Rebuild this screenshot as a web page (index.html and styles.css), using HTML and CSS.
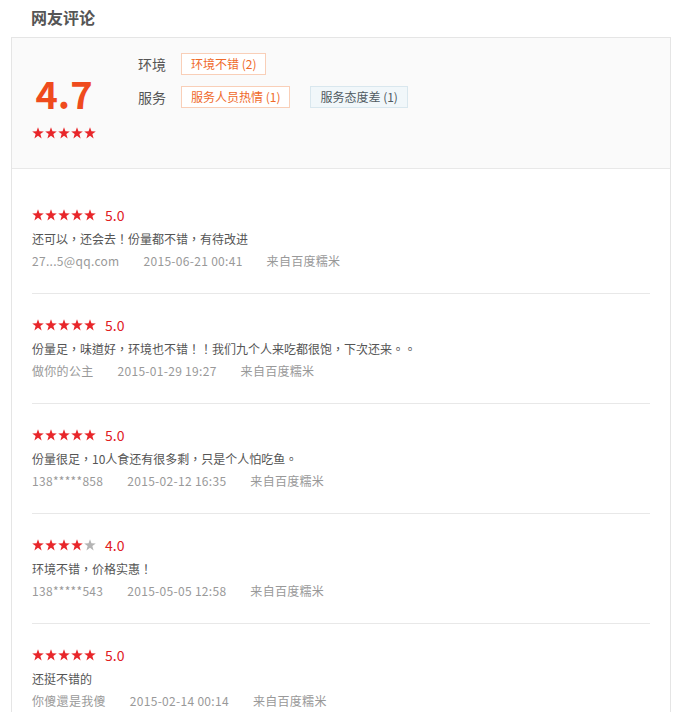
FILE: index.html
```html
<!DOCTYPE html>
<html>
<head>
    <meta charset="utf-8">
    <title>网友评论</title>
    <link rel="stylesheet" href="styles.css">
</head>
<body>
    <svg width="0" height="0" class="defs">
        <symbol id="star" viewBox="0 0 12 12">
            <polygon points="6,0.3 7.45,4.3 11.8,4.4 8.35,7.05 9.6,11.4 6,8.85 2.4,11.4 3.65,7.05 0.2,4.4 4.55,4.3"/>
        </symbol>
    </svg>

    <div class="comments">
        <div class="title">网友评论</div>

        <div class="panel">
            <div class="summary">
                <div class="score">
                    <div class="score-num">4.7</div>
                    <div class="stars">
                        <svg class="star"><use href="#star"/></svg><svg class="star"><use href="#star"/></svg><svg class="star"><use href="#star"/></svg><svg class="star"><use href="#star"/></svg><svg class="star"><use href="#star"/></svg>
                    </div>
                </div>
                <div class="tags">
                    <div class="tag-row">
                        <span class="tag-label">环境</span>
                        <span class="tag good">环境不错 (2)</span>
                    </div>
                    <div class="tag-row">
                        <span class="tag-label">服务</span>
                        <span class="tag good">服务人员热情 (1)</span>
                        <span class="tag bad">服务态度差 (1)</span>
                    </div>
                </div>
            </div>

            <div class="list">
                <div class="review">
                    <div class="rate">
                        <span class="stars"><svg class="star"><use href="#star"/></svg><svg class="star"><use href="#star"/></svg><svg class="star"><use href="#star"/></svg><svg class="star"><use href="#star"/></svg><svg class="star"><use href="#star"/></svg></span>
                        <span class="rate-num">5.0</span>
                    </div>
                    <div class="text">还可以，还会去！份量都不错，有待改进</div>
                    <div class="meta"><span>27...5@qq.com</span><span>2015-06-21 00:41</span><span>来自百度糯米</span></div>
                </div>
                <div class="review">
                    <div class="rate">
                        <span class="stars"><svg class="star"><use href="#star"/></svg><svg class="star"><use href="#star"/></svg><svg class="star"><use href="#star"/></svg><svg class="star"><use href="#star"/></svg><svg class="star"><use href="#star"/></svg></span>
                        <span class="rate-num">5.0</span>
                    </div>
                    <div class="text">份量足，味道好，环境也不错！！我们九个人来吃都很饱，下次还来。。</div>
                    <div class="meta"><span>做你的公主</span><span>2015-01-29 19:27</span><span>来自百度糯米</span></div>
                </div>
                <div class="review">
                    <div class="rate">
                        <span class="stars"><svg class="star"><use href="#star"/></svg><svg class="star"><use href="#star"/></svg><svg class="star"><use href="#star"/></svg><svg class="star"><use href="#star"/></svg><svg class="star"><use href="#star"/></svg></span>
                        <span class="rate-num">5.0</span>
                    </div>
                    <div class="text">份量很足，10人食还有很多剩，只是个人怕吃鱼。</div>
                    <div class="meta"><span>138*****858</span><span>2015-02-12 16:35</span><span>来自百度糯米</span></div>
                </div>
                <div class="review">
                    <div class="rate">
                        <span class="stars"><svg class="star"><use href="#star"/></svg><svg class="star"><use href="#star"/></svg><svg class="star"><use href="#star"/></svg><svg class="star"><use href="#star"/></svg><svg class="star off"><use href="#star"/></svg></span>
                        <span class="rate-num">4.0</span>
                    </div>
                    <div class="text">环境不错，价格实惠！</div>
                    <div class="meta"><span>138*****543</span><span>2015-05-05 12:58</span><span>来自百度糯米</span></div>
                </div>
                <div class="review">
                    <div class="rate">
                        <span class="stars"><svg class="star"><use href="#star"/></svg><svg class="star"><use href="#star"/></svg><svg class="star"><use href="#star"/></svg><svg class="star"><use href="#star"/></svg><svg class="star"><use href="#star"/></svg></span>
                        <span class="rate-num">5.0</span>
                    </div>
                    <div class="text">还挺不错的</div>
                    <div class="meta"><span>你傻還是我傻</span><span>2015-02-14 00:14</span><span>来自百度糯米</span></div>
                </div>
            </div>
        </div>
    </div>
</body>
</html>
```

FILE: styles.css
```css
body {
    margin: 0;
    background-color: #ffffff;
    font-family: "Noto Sans CJK SC", "Noto Sans", sans-serif;
    color: #555555;
}
.defs {
    position: absolute;
}
.comments {
    margin-left: 11px;
    width: 660px;
}
.title {
    height: 34px;
    line-height: 34px;
    margin-bottom: 3px;
    padding-left: 20px;
    font-size: 16px;
    font-weight: bold;
    color: #555555;
}
.panel {
    border: 1px solid #e5e5e5;
    border-bottom: none;
}
.summary {
    display: flex;
    align-items: flex-start;
    box-sizing: border-box;
    height: 131px;
    padding: 15px 0 0 20px;
    background-color: #fafafa;
    border-bottom: 1px solid #e8e8e8;
}
.score {
    width: 64px;
    margin-top: 20px;
    margin-right: 42px;
    text-align: center;
}
.score-num {
    height: 40px;
    line-height: 40px;
    font-size: 38px;
    font-weight: bold;
    color: #ef4b1d;
}
.score .stars {
    margin-top: 14px;
}
.stars {
    display: inline-flex;
    gap: 1px;
}
.star {
    width: 12px;
    height: 12px;
    fill: #e8262a;
}
.star.off {
    fill: #b4b4b4;
}
.tag-row {
    display: flex;
    align-items: center;
    height: 22px;
    margin-bottom: 11px;
}
.tag-label {
    width: 28px;
    margin-right: 15px;
    font-size: 14px;
    color: #555555;
}
.tag {
    box-sizing: border-box;
    height: 22px;
    line-height: 20px;
    padding: 0 9px;
    margin-right: 20px;
    font-size: 12px;
    border: 1px solid #f9cfb8;
    background-color: #ffffff;
}
.tag.good {
    color: #ef6a2a;
}
.tag.bad {
    color: #4f5a60;
    background-color: #f1f7fa;
    border-color: #d9e7ee;
}
.list {
    padding: 15px 20px 0;
}
.review {
    padding: 22px 0 21px;
    border-bottom: 1px solid #e8e8e8;
}
.rate {
    display: flex;
    align-items: center;
    height: 18px;
}
.rate-num {
    margin-left: 9px;
    font-size: 14px;
    color: #e0201f;
}
.text {
    margin-top: 4px;
    line-height: 22px;
    font-family: "Noto Sans CJK TC", "Noto Sans CJK SC", sans-serif;
    font-size: 12px;
    color: #555555;
}
.meta {
    display: flex;
    gap: 24px;
    line-height: 22px;
    font-size: 12px;
    letter-spacing: 0.3px;
    color: #999999;
}
```
